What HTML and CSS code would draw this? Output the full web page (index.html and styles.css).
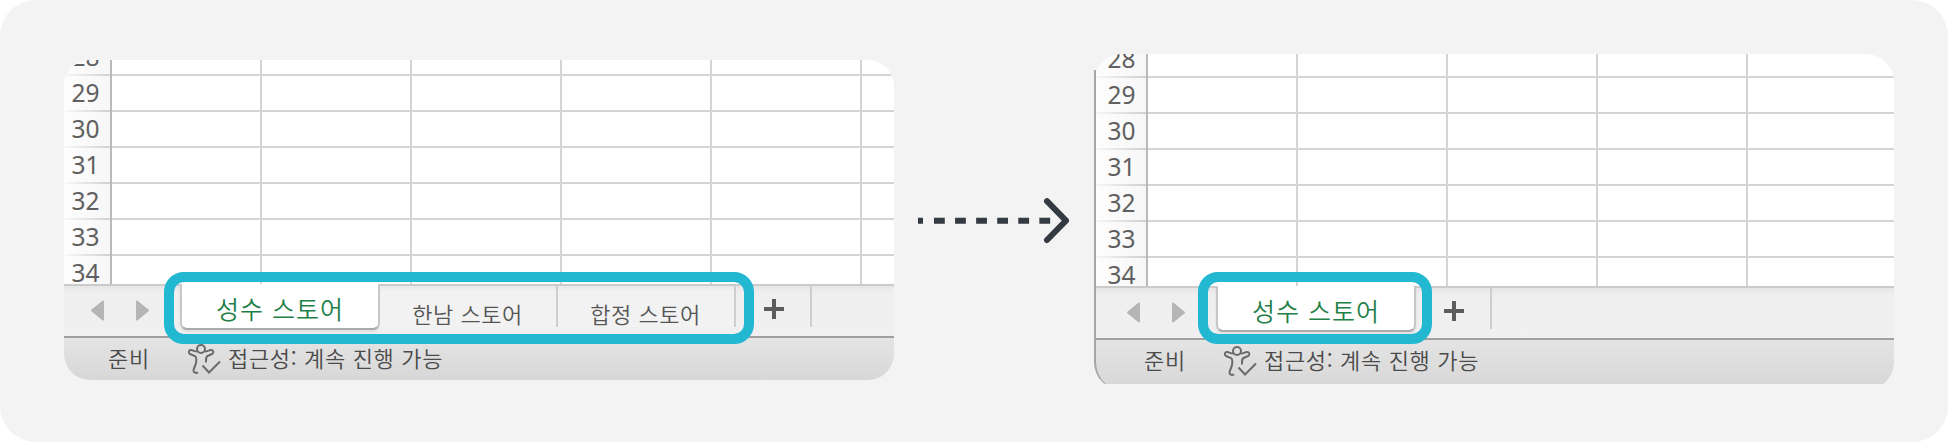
FILE: index.html
```html
<!DOCTYPE html>
<html lang="ko">
<head>
<meta charset="utf-8">
<title>성수 스토어</title>
<link rel="stylesheet" href="styles.css">
</head>
<body>
<svg width="0" height="0" class="defs" aria-hidden="true">
  <symbol id="prev" viewBox="0 0 14 20"><path d="M13 1 2 10l11 9z" fill="#b5b5b5" stroke="#b5b5b5" stroke-width="2" stroke-linejoin="round"/></symbol>
  <symbol id="next" viewBox="0 0 14 20"><path d="M1 1l11 9-11 9z" fill="#b5b5b5" stroke="#b5b5b5" stroke-width="2" stroke-linejoin="round"/></symbol>
  <symbol id="plus" viewBox="0 0 20 20"><path d="M10 0v20M0 10h20" stroke="#5c5c5c" stroke-width="4"/></symbol>
  <symbol id="access" viewBox="0 0 34 32">
    <g fill="none" stroke="#6a6a6a" stroke-width="2">
      <circle cx="14" cy="6" r="4"/>
      <path d="M10 8.5C7 8.5 5.500 6.500 3.500 7C1.500 7.500 1.200 10 3 11L8 13.200C9.500 14 9.500 17 9 20C8.500 23 6.200 26 6.500 28C7 30.200 9.500 30.200 11 29.300"/>
      <path d="M18 8.500C21 8.500 22.500 6.500 24.500 7C26.800 7.500 27 10 25 11L20.500 13C19 13.800 19 15 19 19.500"/>
      <path d="M15.500 22.500l6.500 7L33 18.500"/>
    </g>
  </symbol>
</svg>
<main class="canvas">
  <section class="panel before">
    <div class="window">
      <div class="grid">
        <div class="row first"><span class="num">28</span><i></i><i></i><i></i><i></i><i></i><i></i></div>
        <div class="row"><span class="num">29</span><i></i><i></i><i></i><i></i><i></i><i></i></div>
        <div class="row"><span class="num">30</span><i></i><i></i><i></i><i></i><i></i><i></i></div>
        <div class="row"><span class="num">31</span><i></i><i></i><i></i><i></i><i></i><i></i></div>
        <div class="row"><span class="num">32</span><i></i><i></i><i></i><i></i><i></i><i></i></div>
        <div class="row"><span class="num">33</span><i></i><i></i><i></i><i></i><i></i><i></i></div>
        <div class="row last"><span class="num">34</span><i></i><i></i><i></i><i></i><i></i><i></i></div>
      </div>
      <div class="tabs">
        <div class="nav"><svg class="tri"><use href="#prev"/></svg><svg class="tri"><use href="#next"/></svg></div>
        <div class="tab active">성수 스토어</div>
        <div class="tab">한남 스토어</div>
        <div class="tab">합정 스토어</div>
        <div class="add"><svg class="plus"><use href="#plus"/></svg></div>
      </div>
      <div class="status"><span class="ready">준비</span><svg class="access"><use href="#access"/></svg><span class="msg">접근성: 계속 진행 가능</span></div>
    </div>
    <div class="highlight"></div>
  </section>
  <svg class="arrow" viewBox="0 0 152 48">
    <g fill="none" stroke="#343a42" stroke-width="6">
      <path d="M0 24.700h5M16 24.700h116.500" stroke-dasharray="10.800 10.270"/>
      <path d="M129 5.200 148 24.700 129 44" stroke-linecap="round" stroke-linejoin="round"/>
    </g>
  </svg>
  <section class="panel after">
    <div class="window">
      <div class="grid">
        <div class="row first"><span class="num">28</span><i></i><i></i><i></i><i></i><i></i></div>
        <div class="row"><span class="num">29</span><i></i><i></i><i></i><i></i><i></i></div>
        <div class="row"><span class="num">30</span><i></i><i></i><i></i><i></i><i></i></div>
        <div class="row"><span class="num">31</span><i></i><i></i><i></i><i></i><i></i></div>
        <div class="row"><span class="num">32</span><i></i><i></i><i></i><i></i><i></i></div>
        <div class="row"><span class="num">33</span><i></i><i></i><i></i><i></i><i></i></div>
        <div class="row last"><span class="num">34</span><i></i><i></i><i></i><i></i><i></i></div>
      </div>
      <div class="tabs">
        <div class="nav"><svg class="tri"><use href="#prev"/></svg><svg class="tri"><use href="#next"/></svg></div>
        <div class="tab active">성수 스토어</div>
        <div class="add"><svg class="plus"><use href="#plus"/></svg></div>
      </div>
      <div class="status"><span class="ready">준비</span><svg class="access"><use href="#access"/></svg><span class="msg">접근성: 계속 진행 가능</span></div>
    </div>
    <div class="edge"></div>
    <div class="highlight"></div>
  </section>
</main>
</body>
</html>
```
FILE: styles.css
```css
* { box-sizing: border-box; }
body { margin: 0; background: #fff; font-family: "Noto Sans CJK KR", sans-serif; }
.defs { display: block; }
.canvas {
  display: flex;
  align-items: flex-start;
  width: 1948px;
  height: 442px;
  padding-left: 64px;
  border-radius: 36px;
  background: #f3f3f3;
}
.panel { position: relative; flex: none; }
.before { width: 830px; height: 320px; margin-top: 60px; }
.after { width: 800px; height: 330px; margin-top: 54px; margin-left: 24px; overflow: hidden; }
.window { display: flex; flex-direction: column; overflow: hidden; border-radius: 26px; background: #fff; height: 320px; }
.after .window { height: 336px; border-radius: 28px; }

.row { display: flex; height: 36px; overflow: hidden; }
.row.first { height: 16px; align-items: flex-end; }
.after .row.first { height: 24px; }
.row.last { height: 28px; }
.row i { flex: none; width: 150px; height: 36px; border: solid #d4d4d4; border-width: 0 2px 2px 0; }
.num {
  flex: none;
  width: 48px;
  height: 36px;
  padding-right: 10.5px;
  border-right: 2px solid #b9b9b9;
  background:
    linear-gradient(90deg, #f8f8f8, #d0d0d0) 0 34px / 100% 2px no-repeat,
    linear-gradient(90deg, #fdfdfd, #f7f7f7);
  font: 24.5px/34px "Noto Sans", sans-serif;
  text-align: right;
  color: #606060;
}
.after .num { width: 54px; }

.tabs {
  display: flex;
  flex: none;
  height: 52px;
  border-top: 2px solid #cbcbcb;
  background: linear-gradient(#e6e6e6, #efefef 7px, #f0f0f0);
}
.nav { display: flex; gap: 32px; width: 116px; padding: 14px 0 0 26px; }
.after .nav { width: 122px; padding-left: 32px; }
.tri { width: 14px; height: 21px; }
.tab {
  width: 178px;
  height: 41px;
  padding-top: 11px;
  padding-right: 1px;
  border-right: 2px solid #cecece;
  font-size: 22px;
  line-height: 32px;
  font-weight: 350;
  letter-spacing: .5px;
  text-align: center;
  color: #555;
  white-space: nowrap;
  background: linear-gradient(#e8e8e8, #f2f2f2 5px);
}
.tab.active {
  width: 200px;
  height: 46px;
  margin-top: -2px;
  padding-top: 8px;
  padding-right: 0;
  border: 2px solid #c8c8c8;
  border-top: 0;
  border-bottom-color: #aaa;
  border-radius: 0 0 7px 7px;
  background: #fff;
  box-shadow: 0 2px 3px rgba(0, 0, 0, .08);
  font-size: 25px;
  letter-spacing: 1px;
  color: #1f8049;
}
.add { width: 76px; height: 41px; padding: 13px 0 0 28px; border-right: 2px solid #cecece; }
.plus { display: block; width: 20px; height: 20px; }

.status {
  display: flex;
  flex: none;
  height: 44px;
  padding-left: 44px;
  border-top: 2px solid #a0a0a0;
  background: linear-gradient(#e4e4e4, #d7d7d7);
  font-size: 22px;
  line-height: 39px;
  letter-spacing: .65px;
  color: #4a4a4a;
  font-weight: 350;
  white-space: nowrap;
}
.after .status { height: 50px; padding-left: 50px; }
.ready { width: 79px; }
.access { width: 34px; height: 32px; margin: 5px 7px 0 0; }

.edge {
  position: absolute;
  left: 0;
  top: 16px;
  width: 60px;
  height: 320px;
  border-left: 2px solid #a6a6a6;
  border-radius: 0 0 0 28px;
}
.highlight { position: absolute; left: 100px; top: 212px; width: 590px; height: 72px; border: 10px solid #22b8d1; border-radius: 20px; }
.after .highlight { left: 104px; top: 218px; width: 234px; }
.arrow { flex: none; width: 152px; height: 48px; margin: 196px 0 0 24px; }
```
